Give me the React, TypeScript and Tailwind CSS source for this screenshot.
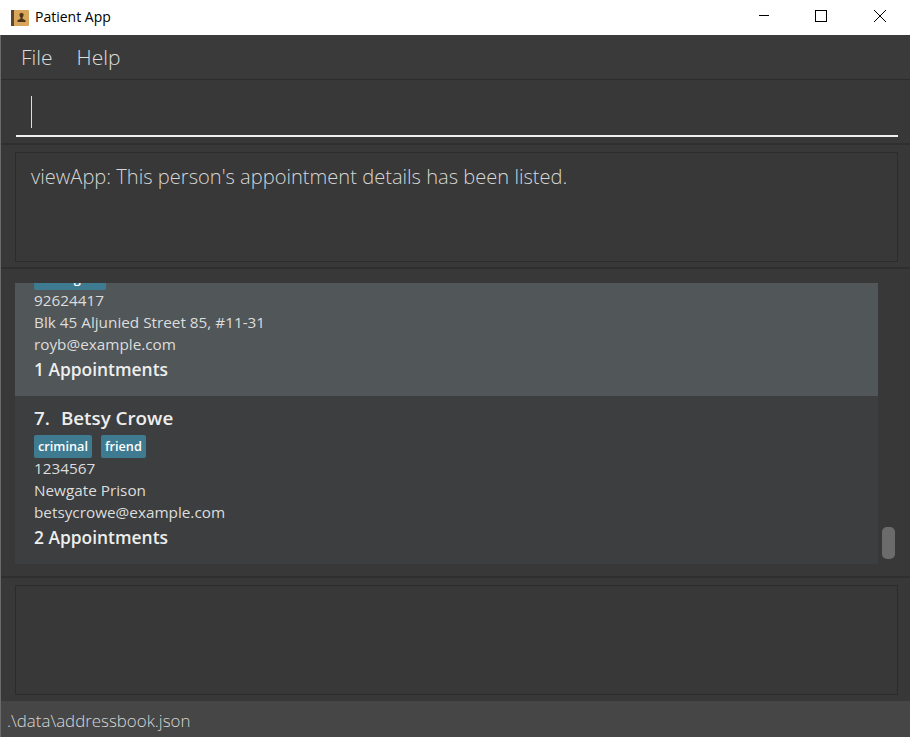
const font = { sans: "font-['Open_Sans','Noto_Sans',sans-serif]" };

function AppIcon() {
  return (
    <svg width="18" height="16" viewBox="0 0 18 16">
      <rect x="0" y="0" width="18" height="16" rx="1" fill="#d9a75c" />
      <rect x="0" y="0" width="3" height="16" fill="#5c4630" />
      <path d="M10.5 3a2 2 0 0 1 2 2.4c-.1.9-.6 1.6-1 2v1.3l3 1.5V12H6.5v-1.800l3-1.500V7.400c-.4-.4-.9-1.100-1-2A2 2 0 0 1 10.500 3z" fill="#4d3617" />
    </svg>
  );
}

function WindowButtons() {
  return (
    <div className="ml-auto flex items-center gap-[46px] pb-[3px] pr-[24px]">
      <svg width="10" height="12" viewBox="0 0 10 12">
        <path d="M0 5.500H10" stroke="#000" strokeWidth="1" />
      </svg>
      <svg width="12" height="12" viewBox="0 0 12 12">
        <rect x="0.500" y="0.500" width="11" height="11" fill="none" stroke="#000" strokeWidth="1" />
      </svg>
      <svg className="ml-[1px]" width="12" height="12" viewBox="0 0 12 12">
        <path d="M0 0L12 12M12 0L0 12" stroke="#000" strokeWidth="1" />
      </svg>
    </div>
  );
}

function Tag({ label }: { label: string }) {
  return (
    <span className="flex h-[23px] items-center rounded-[2px] bg-[#3e7b91] px-[4px] text-[12.700px] font-semibold leading-none text-white">
      {label}
    </span>
  );
}

function PersonCard({ index, name, tags, phone, address, email, appts, selected }: {
  index: number;
  name: string;
  tags: string[];
  phone: string;
  address: string;
  email: string;
  appts: string;
  selected?: boolean;
}) {
  return (
    <div className={selected ? "shrink-0 bg-[#515658] pb-[14px] pl-[19px] pt-[9px]" : "shrink-0 bg-[#3c3e3f] pb-[14px] pl-[19px] pt-[9px]"}>
      <div className="h-[26px] text-[18.800px] font-semibold leading-[26px] text-[#eeeeee]">
        <span className="mr-[11px]">{index}.</span>
        {name}
      </div>
      <div className="mt-[4px] flex h-[22px] gap-[9px]">
        {tags.map((t) => (
          <Tag key={t} label={t} />
        ))}
      </div>
      <div className="text-[15.300px] leading-[22px] text-[#dddddd]">{phone}</div>
      <div className="text-[15.300px] leading-[22px] text-[#dddddd]">{address}</div>
      <div className="text-[15.300px] leading-[22px] text-[#dddddd]">{email}</div>
      <div className="mt-[2px] text-[17.400px] font-semibold leading-[25px] text-[#eeeeee]">{appts}</div>
    </div>
  );
}

export default function App() {
  return (
    <div className={`flex h-[737px] w-[910px] flex-col overflow-hidden bg-[#383838] ${font.sans}`}>
      {/* Title bar */}
      <div className="flex h-[35px] shrink-0 items-center bg-white pl-[11px] text-black">
        <AppIcon />
        <span className="mb-[2px] ml-[6px] text-[14px] leading-none">Patient App</span>
        <WindowButtons />
      </div>

      <div className="flex min-h-0 flex-1 flex-col border-l border-[#6a6a6a]">
        {/* Menu bar */}
        <div className="flex h-[45px] shrink-0 items-center gap-[24px] border-b border-[#2c2c2c] bg-[#3a3a3a] pl-[20px] text-[21px] font-light leading-none text-[#dddddd]">
          <span>File</span>
          <span>Help</span>
        </div>

        {/* Command box */}
        <div className="h-[65px] shrink-0 border-b-2 border-[#2f2f2f] pl-[15px] pr-[12px] pt-[15px]">
          <div className="h-[42px] border-b-2 border-[#f0f0f0] pl-[15px] pt-[1px]">
            <div className="h-[32px] w-px bg-[#dddddd]" />
          </div>
        </div>

        {/* Result display */}
        <div className="h-[124px] shrink-0 border-b-2 border-[#2f2f2f] pb-[5px] pl-[14px] pr-[12px] pt-[7px]">
          <div className="h-full border border-[#2c2c2c] pl-[15px] pt-[8px] text-[20.100px] font-light leading-[32px] text-[#d6d6d6]">
            viewApp: This person's appointment details has been listed.
          </div>
        </div>

        {/* Person list */}
        <div className="flex h-[309px] shrink-0 border-b-2 border-[#2f2f2f] pb-[12px] pl-[14px] pt-[14px]">
          <div className="flex w-[863px] flex-col justify-end overflow-hidden">
            <PersonCard
              index={6}
              name="Roy Balakrishnan"
              tags={["colleagues"]}
              phone="92624417"
              address="Blk 45 Aljunied Street 85, #11-31"
              email="royb@example.com"
              appts="1 Appointments"
              selected
            />
            <PersonCard
              index={7}
              name="Betsy Crowe"
              tags={["criminal", "friend"]}
              phone="1234567"
              address="Newgate Prison"
              email="betsycrowe@example.com"
              appts="2 Appointments"
            />
          </div>
          <div className="flex flex-1 flex-col justify-end pb-[5px] pl-[4px]">
            <div className="h-[32px] w-[13px] rounded-[5px] bg-[#6b6b6b]" />
          </div>
        </div>

        {/* Bottom panel */}
        <div className="min-h-0 flex-1 pb-[6px] pl-[14px] pt-[7px]">
          <div className="h-full w-[883px] border border-[#2c2c2c]" />
        </div>

        {/* Status bar */}
        <div className="flex h-[36px] shrink-0 items-center bg-[#464646] pl-[6px] pt-[5px] text-[16.900px] font-light leading-none text-[#d6d6d6]">
          .\data\addressbook.json
        </div>
      </div>
    </div>
  );
}
